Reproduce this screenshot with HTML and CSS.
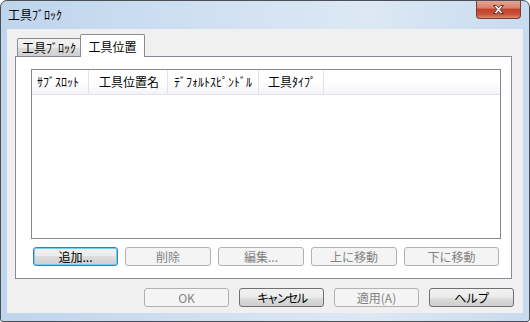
FILE: index.html
```html
<!DOCTYPE html>
<html lang="ja">
<head>
    <meta charset="UTF-8">
    <title>工具ﾌﾞﾛｯｸ</title>
    <link rel="stylesheet" href="styles.css">
</head>
<body>
    <div class="window">
        <!-- Title bar -->
        <div class="titlebar">
            <span class="title">工具ﾌﾞﾛｯｸ</span>
            <div class="close">
                <svg width="13" height="11" viewBox="0 0 13 11">
                    <path d="M1.5 1.5h3l2 2.3 2-2.3h3l-3.5 4 3.5 4h-3l-2-2.3-2 2.3h-3l3.5-4z" fill="#fff" stroke="#4a3a3a" stroke-width="1" stroke-linejoin="round"/>
                </svg>
            </div>
        </div>

        <!-- Client area -->
        <div class="client">
            <div class="tabs">
                <div class="tab">工具ﾌﾞﾛｯｸ</div>
                <div class="tab active">工具位置</div>
            </div>

            <div class="panel">
                <div class="list">
                    <div class="list-head">
                        <div class="col c1">ｻﾌﾞｽﾛｯﾄ</div>
                        <div class="col c2">工具位置名</div>
                        <div class="col c3">ﾃﾞﾌｫﾙﾄｽﾋﾟﾝﾄﾞﾙ</div>
                        <div class="col c4">工具ﾀｲﾌﾟ</div>
                    </div>
                </div>

                <div class="row-buttons">
                    <div class="btn default w85">追加...</div>
                    <div class="btn disabled w86">削除</div>
                    <div class="btn disabled w86">編集...</div>
                    <div class="btn disabled w86">上に移動</div>
                    <div class="btn disabled w95">下に移動</div>
                </div>
            </div>

            <div class="dialog-buttons">
                <div class="btn disabled w85">OK</div>
                <div class="btn w85"><span class="squeeze">キャンセル</span></div>
                <div class="btn disabled w85">適用(A)</div>
                <div class="btn w85"><span class="squeeze-sm">ヘルプ</span></div>
            </div>
        </div>
    </div>
</body>
</html>
```

FILE: styles.css
```css
/* General */
body {
    margin: 0;
    font-family: "Noto Sans CJK JP", "Noto Sans", sans-serif;
    font-size: 12px;
    color: #000;
    white-space: nowrap;
}

/* Full-width katakana, tightened to the proportional UI font */
.squeeze {
    letter-spacing: -2.2px;
}

.squeeze-sm {
    letter-spacing: -0.5px;
}

/* Window frame */
.window {
    width: 530px;
    height: 322px;
    box-sizing: border-box;
    border: 1px solid #4b5058;
    border-radius: 7px 7px 3px 3px;
    padding: 0 6px 8px;
    display: flex;
    flex-direction: column;
    background: linear-gradient(to right, #bed5ec 0%, #d3e2f2 45%, #dce8f4 70%, #c7dbee 100%);
}

.titlebar {
    height: 28px;
    flex: none;
    display: flex;
    justify-content: space-between;
    align-items: flex-start;
}

.title {
    margin: 5px 0 0 1px;
    line-height: 17px;
}

.close {
    width: 45px;
    height: 18px;
    margin-right: 2px;
    box-sizing: border-box;
    border: 1px solid #7a3a30;
    border-top: none;
    border-radius: 0 0 4px 4px;
    background: linear-gradient(#e8a493 0%, #d9826d 40%, #c3412a 50%, #c85538 80%, #dd8a6f 100%);
    display: flex;
    align-items: center;
    justify-content: center;
}

/* Client area */
.client {
    flex: 1;
    background: #f0f0f0;
    padding: 5px 0 0 8px;
}

/* Tabs */
.tabs {
    display: flex;
    align-items: flex-end;
    height: 23px;
    padding-left: 2px;
    margin-bottom: -1px;
    position: relative;
    z-index: 1;
}

.tab {
    box-sizing: border-box;
    border: 1px solid #898c95;
    border-bottom: none;
    border-radius: 2px 2px 0 0;
    line-height: 17px;
    text-align: center;
}

.tab:first-child {
    width: 64px;
    height: 18px;
    margin-bottom: 1px;
    background: linear-gradient(#f3f3f3 0%, #ebebeb 50%, #dddddd 50%, #cfcfcf 100%);
}

.tab.active {
    width: 65px;
    height: 23px;
    margin-left: -1px;
    padding-top: 3px;
    background: #fff;
}

/* Tab page */
.panel {
    width: 497px;
    height: 223px;
    box-sizing: border-box;
    border: 1px solid #898c95;
    background: #fff;
    padding: 12px 0 0 15px;
}

/* List view */
.list {
    width: 470px;
    height: 170px;
    box-sizing: border-box;
    border: 1px solid #828790;
    background: #fff;
}

.list-head {
    display: flex;
    height: 24px;
    border-bottom: 1px solid #e2e3e5;
    background: linear-gradient(#ffffff 0%, #ffffff 45%, #f3f4f6 100%);
}

.col {
    box-sizing: border-box;
    border-right: 1px solid #e2e3e5;
    padding-left: 6px;
    line-height: 23px;
}

.c1 { width: 57px; padding-left: 5px; }
.c2 { width: 79px; padding-left: 10px; }
.c3 { width: 91px; }
.c4 { width: 65px; padding-left: 9px; }

/* Buttons */
.row-buttons {
    display: flex;
    gap: 7px;
    margin-top: 8px;
    padding-left: 2px;
}

.dialog-buttons {
    display: flex;
    justify-content: flex-end;
    gap: 10px;
    margin-top: 9px;
    padding-right: 9px;
}

.btn {
    height: 19px;
    box-sizing: border-box;
    border: 1px solid #707070;
    border-radius: 3px;
    background: linear-gradient(#f2f2f2 0%, #ebebeb 50%, #dddddd 50%, #cfcfcf 100%);
    text-align: center;
    line-height: 17px;
}

.btn.default {
    border-color: #3c7fb1;
    box-shadow: inset 0 0 0 1px #6fd0f6;
}

.btn.disabled {
    border-color: #adb2b5;
    background: #f4f4f4;
    color: #838383;
}

.w85 { width: 85px; }
.w86 { width: 86px; }
.w95 { width: 95px; }
```
